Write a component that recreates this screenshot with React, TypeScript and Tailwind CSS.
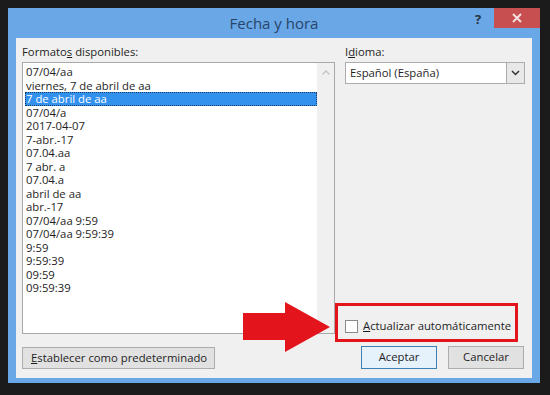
import React from "react";

const formatos = [
  "07/04/aa",
  "viernes, 7 de abril de aa",
  "7 de abril de aa",
  "07/04/a",
  "2017-04-07",
  "7-abr.-17",
  "07.04.aa",
  "7 abr. a",
  "07.04.a",
  "abril de aa",
  "abr.-17",
  "07/04/aa 9:59",
  "07/04/aa 9:59:39",
  "9:59",
  "9:59:39",
  "09:59",
  "09:59:39",
];

export default function App() {
  return (
    <div
      className="w-[550px] h-[395px] bg-[#1b1b1b] pt-[8px] pl-[8px] overflow-hidden whitespace-nowrap"
      style={{ fontFamily: '"Open Sans", "Noto Sans", sans-serif' }}
    >
      {/* window frame */}
      <div className="w-[532px] h-[375px] bg-[#69a7e7] flex flex-col">
        {/* title bar */}
        <div className="h-[30px] flex items-start">
          <div className="flex-1 text-center text-[15px] text-[#27456a] pt-[4px] pl-[72px]">
            Fecha y hora
          </div>
          <div className="w-[20px] text-center text-[13px] font-bold text-[#2a3440] pt-[2px] mr-[6px]">
            ?
          </div>
          <div className="w-[46px] h-[20px] bg-[#c74f4f] flex items-center justify-center">
            <svg width="10" height="10" viewBox="0 0 10 10">
              <path d="M1 1 L9 9 M9 1 L1 9" stroke="#f5dede" strokeWidth="2" />
            </svg>
          </div>
        </div>

        {/* content */}
        <div className="mx-[8px] h-[340px] bg-[#f0f0f0] flex gap-[10px] pl-[6px] pr-[7px] text-[11.3px] text-[#1e1e1e] relative">
          {/* left column */}
          <div className="w-[313px] flex flex-col">
            <div className="pt-[6px] h-[24px] leading-[16px]">
              Formato<span className="underline">s</span> disponibles:
            </div>
            <div className="h-[272px] border border-[#a9a9a9] bg-white flex">
              <div className="flex-1 pt-[2px] pl-[2px]">
                {formatos.map((f, i) =>
                  i === 2 ? (
                    <div
                      key={f}
                      className="h-[13.5px] leading-[11.5px] bg-[#3391ee] text-white border border-dotted border-[#1b3c66]"
                    >
                      {f}
                    </div>
                  ) : (
                    <div key={f} className="h-[13.5px] leading-[13.5px] pl-[1px]">
                      {f}
                    </div>
                  )
                )}
              </div>
              <div className="w-[17px] bg-[#f0f0f0] flex justify-center pt-[7px]">
                <svg width="8" height="5" viewBox="0 0 8 5">
                  <path d="M0.5 4.5 L4 1 L7.5 4.5" stroke="#c4c4c4" strokeWidth="1.3" fill="none" />
                </svg>
              </div>
            </div>
            <div className="mt-[13px]">
              <button className="h-[22px] w-[193px] border border-[#adadad] bg-[#e1e1e1] text-left pl-[8px] text-[11.3px]">
                <span className="underline">E</span>stablecer como predeterminado
              </button>
            </div>
          </div>

          {/* right column */}
          <div className="flex-1 flex flex-col">
            <div className="pt-[6px] h-[24px] leading-[16px]">
              I<span className="underline">d</span>ioma:
            </div>
            <div className="h-[22px] border border-[#acacac] bg-white flex">
              <div className="flex-1 pl-[4px] leading-[20px]">Español (España)</div>
              <div className="w-[18px] border-l border-[#acacac] bg-[#e8e8e8] flex items-center justify-center">
                <svg width="9" height="6" viewBox="0 0 9 6">
                  <path d="M1 1 L4.5 4.5 L8 1" stroke="#333" strokeWidth="1.5" fill="none" />
                </svg>
              </div>
            </div>
            <div className="flex-1" />
            {/* highlighted checkbox */}
            <div className="-ml-[10px] w-[183px] h-[39px] border-[3px] border-[#e2141c] flex items-center pl-[7px] pt-[8px]">
              <div className="w-[13px] h-[13px] border border-[#8a8a8a] bg-white" />
              <span className="ml-[5px]">
                <span className="underline">A</span>ctualizar automáticamente
              </span>
            </div>
            <div className="flex justify-end gap-[11px] mt-[4px] mb-[9px] pr-[1px]">
              <button className="w-[76px] h-[23px] border border-[#3c7fb1] bg-[#e5f1fb] text-[11.3px]">
                Aceptar
              </button>
              <button className="w-[76px] h-[23px] border border-[#adadad] bg-[#e1e1e1] text-[11.3px]">
                Cancelar
              </button>
            </div>
          </div>

          {/* annotation arrow */}
          <svg
            className="absolute left-[227px] top-[264px]"
            width="90"
            height="52"
            viewBox="0 0 90 52"
          >
            <polygon points="0,11 42,11 42,0 87,25 42,50 42,38 0,38" fill="#e3141b" />
          </svg>
        </div>
      </div>
    </div>
  );
}
